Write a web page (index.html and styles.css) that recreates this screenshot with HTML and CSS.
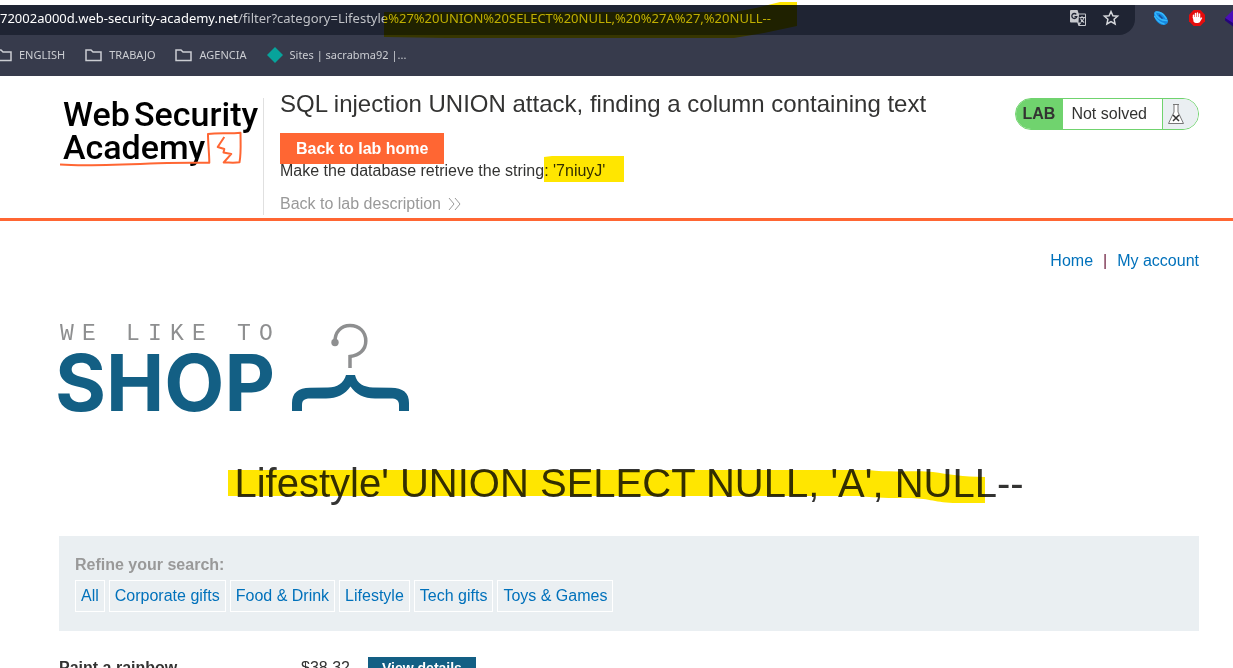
FILE: index.html
```html
<!DOCTYPE html>
<html lang="en">
<head>
<meta charset="utf-8">
<meta name="viewport" content="width=device-width, initial-scale=1">
<title>SQL injection UNION attack, finding a column containing text</title>
<link rel="stylesheet" href="styles.css">
</head>
<body>
<div class="browser">
  <div class="toolbar">
    <div class="address">
      <div class="url"><span class="host">72002a000d.web-security-academy.net</span>/filter?category=Lifestyle%27%20UNION%20SELECT%20NULL,%20%27A%27,%20NULL--</div>
      <button class="icon-button" type="button" aria-label="Translate this page">
        <svg width="18" height="18" viewBox="0 0 18 18"><path d="M2 1h6.500l1.200 3.500H16a1 1 0 0 1 1 1V16a1 1 0 0 1-1 1H9.500L8.300 13.500H2a1 1 0 0 1-1-1V2a1 1 0 0 1 1-1z" fill="#c6c8cd"/><path d="M10 5.500h6V16h-5.500l2-2.500H9.500z" fill="#1f2433"/><path d="M10.500 8.500H16M13 7v1.500M15 8.600c-.5 2-1.600 3.300-3 4.300M11.500 9.500c.7 1.800 2 3 3.700 4" fill="none" stroke="#c6c8cd" stroke-width="1.100"/><path d="M7.300 5.400A2.500 2.500 0 1 0 7.800 7.600H5.500" fill="none" stroke="#1f2433" stroke-width="1.300"/></svg>
      </button>
      <button class="icon-button" type="button" aria-label="Bookmark this page">
        <svg width="16" height="16" viewBox="0 0 16 16"><path d="M8 1.500l1.900 4.300 4.700.4-3.500 3.100 1 4.600L8 11.500l-4.100 2.400 1-4.600L1.400 6.200l4.700-.4z" fill="none" stroke="#d6d8dc" stroke-width="1.500"/></svg>
      </button>
    </div>
    <div class="extensions">
      <svg width="16" height="16" viewBox="0 0 16 16"><path d="M1.500 2C5-.5 13 3 15 11c.3 2-2 4-4.500 4C5 15-1 7 1.500 2z" fill="#1688e0"/><path d="M2 2.500C3 7 8 11 14.500 10.500M2.500 2c5-.5 9 3 11 7M1.500 6c2 4 6 7 10 8" fill="none" stroke="#35b8fa" stroke-width="1.500"/><path d="M6 5l3.500 3.500" stroke="#1c4c91" stroke-width="1.500"/></svg>
      <svg width="16" height="16" viewBox="0 0 16 16"><path d="M4.700 0h6.600L16 4.700v6.600L11.300 16H4.700L0 11.300V4.700z" fill="#e40d0d"/><path d="M4.500 8V5.200M6.500 8V3.500M8.500 8V3M10.500 8V4" stroke="#fff" stroke-width="1.500" stroke-linecap="round"/><path d="M3.800 7h7.400v1.500l1.500-1.300.6.700-2.400 4.200c-.8 1.300-5.300 1.500-6.300-.3z" fill="#fff"/></svg>
      <svg width="8" height="18" viewBox="0 0 8 18"><path d="M0 9l8-8v14z" fill="#4b0db8"/><path d="M0 9v2.500l8 6V14z" fill="#25057a"/></svg>
    </div>
  </div>
  <nav class="bookmarks" aria-label="Bookmarks">
    <a href="#"><svg width="17" height="14" viewBox="0 0 17 14"><path d="M1 12.500V2h5l2 2h8v8.500z" class="folder"/></svg>ENGLISH</a>
    <a href="#"><svg width="17" height="14" viewBox="0 0 17 14"><path d="M1 12.500V2h5l2 2h8v8.500z" class="folder"/></svg>TRABAJO</a>
    <a href="#"><svg width="17" height="14" viewBox="0 0 17 14"><path d="M1 12.500V2h5l2 2h8v8.500z" class="folder"/></svg>AGENCIA</a>
    <a href="#"><svg width="16" height="16" viewBox="0 0 16 16"><path d="M8 0l8 8-8 8-8-8z" fill="#07a39b"/></svg>Sites | sacrabma92 |...</a>
  </nav>
  <svg class="marker marker-url" width="413" height="37" viewBox="0 0 413 37" aria-hidden="true"><path d="M0 10H350L372 6 388 2 396 0H413V24L380 31 350 36H62L0 35z"/></svg>
</div>

<header class="lab-header">
  <a class="academy" href="#" aria-label="Web Security Academy">
    <svg width="204" height="76" viewBox="0 0 204 76">
      <g class="academy-text"><text x="4" y="28">Web</text><text x="75" y="28">Security</text><text x="4" y="61">Academy</text></g>
      <path d="M1 66.500c20 1.500 60 .3 90-1 20-1 40-.6 59.300-.8 0-9-1.300-19-1.300-28.700 10-1.300 22 0 32.500-1.200 0 10 .8 20-1 29.500-5 .8-10 .2-15.800.2l7.600-8.600-7.800-1.500.8-3.400-6.600-2 6.600-10" fill="none" stroke="#ff6633" stroke-width="2" stroke-linejoin="round"/>
    </svg>
  </a>
  <div class="lab-info">
    <h2>SQL injection UNION attack, finding a column containing text</h2>
    <p class="hint"><a class="lab-home" href="#">Back to lab home</a><br>Make the database retrieve the string<span class="marked">: '7niuyJ'<svg class="marker marker-string" width="80" height="26" viewBox="0 0 80 26" aria-hidden="true"><path d="M0 1L8 0H80V26H0z"/></svg></span></p>
    <a class="description" href="#">Back to lab description <svg width="13" height="14" viewBox="0 0 13 14"><path d="M1 1l5 6-5 6M7 1l5 6-5 6" fill="none" stroke="#999" stroke-width="1"/></svg></a>
  </div>
  <div class="status">
    <strong>LAB</strong><span>Not solved</span>
    <div class="flask"><svg width="18" height="22" viewBox="0 0 18 22"><path d="M6 1.500h6M7 2v7L1.500 20.500h15L11 9V2" fill="#fff" stroke="#777" stroke-width="1"/><path d="M6 12l6 6M12 12l-6 6" stroke="#333" stroke-width="1.500"/></svg></div>
  </div>
</header>

<main>
  <nav class="account" aria-label="Account"><a href="#">Home</a><span>|</span><a href="#">My account</a></nav>
  <svg class="shop-logo" width="352" height="92" viewBox="0 0 352 92" role="img" aria-label="We like to shop">
    <text class="tagline" x="1 23 45 67 89 111 133 155 178 200" y="17">WE LIKE TO</text>
    <text class="shop" x="-4" y="88">SHOP</text>
    <circle cx="276" cy="19.500" r="3.700" fill="#8e8f90"/>
    <path d="M276 19.500C275.500 9 282 2.500 291 2.500c9.500 0 15.800 6.500 15.800 15.500S300 32.500 291 33.500V45" fill="none" stroke="#8e8f90" stroke-width="3.500"/>
    <path d="M287 52h9c2 9 9 12 18 12.500l18 .3c12 0 18 5.200 18 15.200v8h-10v-6c0-5-3-6.500-8-6.500h-16c-11 0-19-4-24.500-12C286 71.500 278 75.500 267 75.500h-16c-6 0-8 2-8 7V88h-10v-8c0-10 6-15 18-15.200l18-.3c9 0 16-4.500 18-12.500z" fill="#135f84"/>
  </svg>
  <div class="title-row">
    <h1>Lifestyle' UNION SELECT NULL, 'A', NULL--<svg class="marker marker-title" width="757" height="34" viewBox="0 0 757 34" aria-hidden="true"><path d="M0 1H640C665 4 690 1 705 3S735 8 757 8V34H725C705 33 700 29 680 29S650 29 632 27H0z"/></svg></h1>
  </div>
  <section class="filters">
    <p class="filter-label">Refine your search:</p>
    <div class="filter-list">
      <a href="#">All</a><a href="#">Corporate gifts</a><a href="#">Food &amp; Drink</a><a href="#">Lifestyle</a><a href="#">Tech gifts</a><a href="#">Toys &amp; Games</a>
    </div>
  </section>
  <table class="products">
    <tbody><tr><th scope="row">Paint a rainbow</th><td class="price">$38.32</td><td><a class="details" href="#">View details</a></td></tr></tbody>
  </table>
</main>
</body>
</html>
```
FILE: styles.css
```css
* { box-sizing: border-box; }
html { background: #fff; }
body {
  height: 100vh;
  margin: 0;
  overflow: hidden;
  font: 16px/22px "Liberation Sans", Arial, sans-serif;
  color: #333332;
}
a { color: #0071bb; text-decoration: none; }
svg { flex: none; display: block; overflow: visible; }

.marker { position: absolute; mix-blend-mode: multiply; fill: #ffe600; pointer-events: none; }

.browser {
  position: relative;
  margin-top: 5px;
  background: #373b4c;
  font-family: "Noto Sans", sans-serif;
}
.toolbar { display: flex; height: 30px; overflow: hidden; }
.address {
  display: flex;
  flex: 1;
  align-items: center;
  gap: 16px;
  padding-right: 16px;
  background: #1f2433;
  border-radius: 0 0 16px 0;
}
.url { flex: 1; font-size: 13px; line-height: 26px; padding-bottom: 4px; white-space: nowrap; color: #bfc1c6; }
.host { color: #fff; }
.icon-button { padding: 0; border: 0; background: none; }
.address .icon-button { margin-bottom: 4px; }
.extensions { display: flex; align-items: center; gap: 20px; padding: 0 0 4px 18px; }
.bookmarks { display: flex; align-items: center; gap: 20px; height: 41px; padding-bottom: 2px; font-size: 11px; overflow: hidden; }
.bookmarks a { display: flex; align-items: center; gap: 7px; color: #cbcdd2; white-space: nowrap; }
.bookmarks a:first-child { margin-left: -5px; }
.folder { fill: none; stroke: #cbcdd2; stroke-width: 1.5; }
.marker-url { left: 384px; top: -3px; }

.lab-header {
  display: flex;
  align-items: flex-start;
  padding: 14px 34px 3px 59px;
  border-bottom: 3px solid #ff6633;
}
.academy { align-self: stretch; margin-top: 8px; border-right: 1px solid #e0e0e0; }
.academy-text { font: 500 34px Roboto, sans-serif; fill: #000; }
.lab-info { flex: 1; padding-left: 16px; }
h2 { margin: 0 0 20px; font-size: 24px; line-height: 28px; font-weight: 400; }
.hint { margin: 0 0 11px; }
.lab-home { padding: 7px 16px; background: #ff6633; color: #fff; font-weight: 700; }
.marked { position: relative; }
.marker-string { left: 0; top: -6px; }
.description { display: flex; align-items: center; gap: 7px; color: #999; }

.status {
  display: flex;
  height: 32px;
  margin-top: 8px;
  overflow: hidden;
  border: 1px solid #70d36e;
  border-radius: 16px;
  line-height: 30px;
}
.status strong { padding: 0 8px 0 7px; background: #70d36e; }
.status span { padding: 0 15px 0 8px; }
.flask { display: flex; align-items: center; padding: 0 13px 0 4px; border-left: 1px solid #70d36e; background: #eaeff2; }

main { padding: 29px 34px 0 59px; }
.account { display: flex; justify-content: flex-end; gap: 10px; color: #722443; }
.shop-logo { margin-top: 51px; }
.tagline { font: 23px "Liberation Mono", monospace; fill: #8e8f90; }
.shop { font: 700 78px Inter, "Liberation Sans", sans-serif; fill: #135f84; }
.title-row { display: flex; justify-content: center; margin: 44px 0 29px; }
h1 { position: relative; margin: 0; font-size: 40px; line-height: 48px; font-weight: 400; }
.marker-title { left: -6px; top: 10px; }

.filters { padding: 18px 16px 19px; background: #eaeff2; }
.filter-label { margin: 0; font-weight: 700; color: #999; }
.filter-list { display: flex; flex-wrap: wrap; gap: 4px; margin-top: 4px; }
.filter-list a { padding: 4px 5px; border: 1px solid #fff; }

.products { margin-top: 26px; border-collapse: collapse; }
.products th, .products td { padding: 0; text-align: left; }
.products th { width: 242px; }
.products .price { width: 67px; }
.details { display: block; padding: 0 14px; background: #135f84; color: #fff; font-size: 14px; font-weight: 700; }
```
